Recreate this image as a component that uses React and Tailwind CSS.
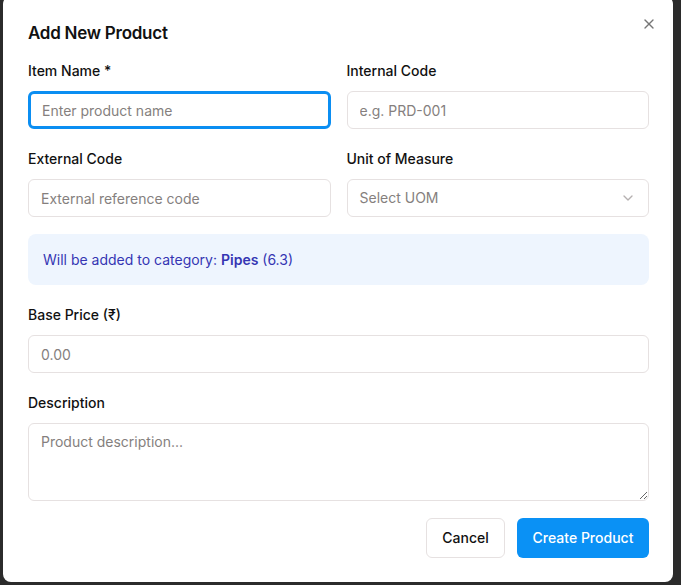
import React from 'react';
import { X, ChevronDown } from 'lucide-react';

const inputBase =
  'w-full h-[38px] rounded-md bg-white px-3 text-sm text-[#111] placeholder:text-[#857f7e] outline-none';

const Etiqueta = ({ children }) => (
  <label className="block text-sm leading-5 font-medium text-[#111] mb-[10px]">{children}</label>
);

export default function App() {
  return (
    <div
      className="h-[585px] w-[681px] overflow-hidden bg-[#2b2b2b]"
      style={{ fontFamily: 'Inter, "Noto Sans", sans-serif' }}
    >
      <div className="relative ml-[3px] mt-[-4px] w-[670px] h-[586px] rounded-lg bg-white pl-[25px] pr-[24px] pt-[23px]">
        <button className="absolute right-[16px] top-[20px] text-[#555] opacity-80">
          <X size={16} strokeWidth={2} />
        </button>

        <h2 className="text-[17px] leading-7 font-semibold text-[#111] tracking-[-0.015em]">Add New Product</h2>

        <div className="mt-[14px] grid grid-cols-2 gap-x-4 gap-y-[20px]">
          <div>
            <Etiqueta>Item Name *</Etiqueta>
            <input
              autoFocus
              className={`${inputBase} border-[3px] border-[#0b8ef2] pl-[11px] caret-[#111]`}
              placeholder="Enter product name"
            />
          </div>
          <div>
            <Etiqueta>Internal Code</Etiqueta>
            <input className={`${inputBase} border border-[#e6e1e1]`} placeholder="e.g. PRD-001" />
          </div>
          <div>
            <Etiqueta>External Code</Etiqueta>
            <input className={`${inputBase} border border-[#e6e1e1]`} placeholder="External reference code" />
          </div>
          <div>
            <Etiqueta>Unit of Measure</Etiqueta>
            <div className="flex h-[38px] items-center justify-between rounded-md border border-[#e6e1e1] bg-white px-3 text-sm text-[#857f7e]">
              <span>Select UOM</span>
              <ChevronDown size={16} className="text-[#b5b0b0]" />
            </div>
          </div>
        </div>

        <div className="mt-[17px] flex h-[51px] items-center rounded-lg bg-[#eef5fe] px-[15px] text-sm text-[#3535b3]">
          <span>
            Will be added to category: <span className="font-semibold">Pipes</span> (6.3)
          </span>
        </div>

        <div className="mt-[20px]">
          <Etiqueta>Base Price (₹)</Etiqueta>
          <input className={`${inputBase} border border-[#e6e1e1]`} placeholder="0.00" />
        </div>

        <div className="mt-[20px]">
          <Etiqueta>Description</Etiqueta>
          <textarea
            className="block w-full h-[78px] rounded-md border border-[#e6e1e1] bg-white px-3 py-2 text-sm text-[#111] placeholder:text-[#857f7e] outline-none"
            placeholder="Product description..."
          />
        </div>

        <div className="mt-[17px] flex justify-end gap-3">
          <button className="h-[40px] w-[79px] rounded-md border border-[#e6e1e1] bg-white text-sm font-medium text-[#111]">
            Cancel
          </button>
          <button className="h-[40px] w-[132px] rounded-md bg-[#0a91f5] text-sm font-medium text-white">
            Create Product
          </button>
        </div>
      </div>
    </div>
  );
}
